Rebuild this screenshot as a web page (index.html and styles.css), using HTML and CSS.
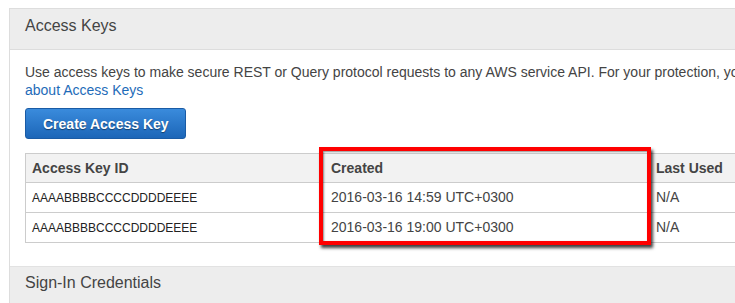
FILE: index.html
```html
<!DOCTYPE html>
<html lang="en">
<head>
  <meta charset="UTF-8" />
  <title>Security Credentials</title>
  <link rel="stylesheet" href="styles.css">
</head>
<body>
  <div class="page">
    <!-- Access Keys section -->
    <div class="panel">
      <div class="panel-head">Access Keys</div>
      <div class="panel-body">
        <p class="intro">
          <span class="nowrap">Use access keys to make secure REST or Query protocol requests to any AWS service API. For your protection, you should never share your secret keys with anyone.</span><br>
          <a href="#">about Access Keys</a>
        </p>
        <button class="create-btn">Create Access Key</button>

        <table class="keys-table">
          <thead>
            <tr>
              <th class="col-id">Access Key ID</th>
              <th class="col-created">Created</th>
              <th class="col-used">Last Used</th>
            </tr>
          </thead>
          <tbody>
            <tr>
              <td class="key-id">AAAABBBBCCCCDDDDEEEE</td>
              <td>2016-03-16 14:59 UTC+0300</td>
              <td>N/A</td>
            </tr>
            <tr>
              <td class="key-id">AAAABBBBCCCCDDDDEEEE</td>
              <td>2016-03-16 19:00 UTC+0300</td>
              <td>N/A</td>
            </tr>
          </tbody>
        </table>
      </div>
      <div class="panel-head next">Sign-In Credentials</div>
    </div>

    <!-- annotation drawn over the Created column -->
    <div class="highlight"></div>
  </div>
</body>
</html>
```

FILE: styles.css
```css
body {
  margin: 0;
  font-family: "Liberation Sans", Arial, sans-serif;
  color: #444;
  background: #fff;
  overflow: hidden;
}

.page {
  position: relative;
  padding: 8px 0 0 9px;
}

.panel {
  width: 960px;
  border-top: 1px solid #ddd;
  border-left: 1px solid #ddd;
}

.panel-head {
  background-color: #ededed;
  border-bottom: 1px solid #ddd;
  padding: 7px 15px 13px;
  font-size: 16px;
  line-height: 20px;
  color: #444;
}

.panel-head.next {
  border-top: 1px solid #e2e2e2;
  border-bottom: none;
  padding-top: 6px;
  height: 34px;
}

.panel-body {
  padding: 13px 15px 23px;
}

.intro {
  margin: 0;
  font-size: 14px;
  line-height: 18px;
}

.nowrap {
  white-space: nowrap;
}

.intro a {
  color: #1e6bb8;
  text-decoration: none;
}

.create-btn {
  display: block;
  margin-top: 9px;
  height: 31px;
  padding: 0 16px 0 17px;
  font-family: "Liberation Sans", Arial, sans-serif;
  font-size: 14px;
  font-weight: bold;
  color: #fff;
  text-shadow: 0 1px 1px rgba(0, 0, 0, 0.45);
  background: linear-gradient(#3a8bdc, #1c66b8);
  border: 1px solid #1a5ba5;
  border-radius: 3px;
}

.keys-table {
  margin-top: 14px;
  border-collapse: collapse;
  width: 930px;
}

.keys-table th,
.keys-table td {
  border-top: 1px solid #ccc;
  border-bottom: 1px solid #ccc;
  padding: 6px 6px 5px;
  text-align: left;
  vertical-align: top;
  font-size: 14px;
  line-height: 17px;
}

.keys-table th {
  background-color: #f2f2f2;
  font-weight: bold;
  color: #444;
  height: 16px;
}

.keys-table td {
  height: 17px;
}

.keys-table th:first-child,
.keys-table td:first-child {
  border-left: 1px solid #ccc;
}

.col-id {
  width: 287px;
}

.col-created {
  width: 313px;
}

.keys-table td.key-id {
  font-size: 12px;
  color: #222;
  padding-top: 7px;
}

.highlight {
  position: absolute;
  left: 319px;
  top: 147px;
  width: 324px;
  height: 90px;
  border: 4px solid #f00;
  box-shadow: 2px 3px 3px rgba(0, 0, 0, 0.75), inset 1px 1px 2px rgba(0, 0, 0, 0.45);
}
```
